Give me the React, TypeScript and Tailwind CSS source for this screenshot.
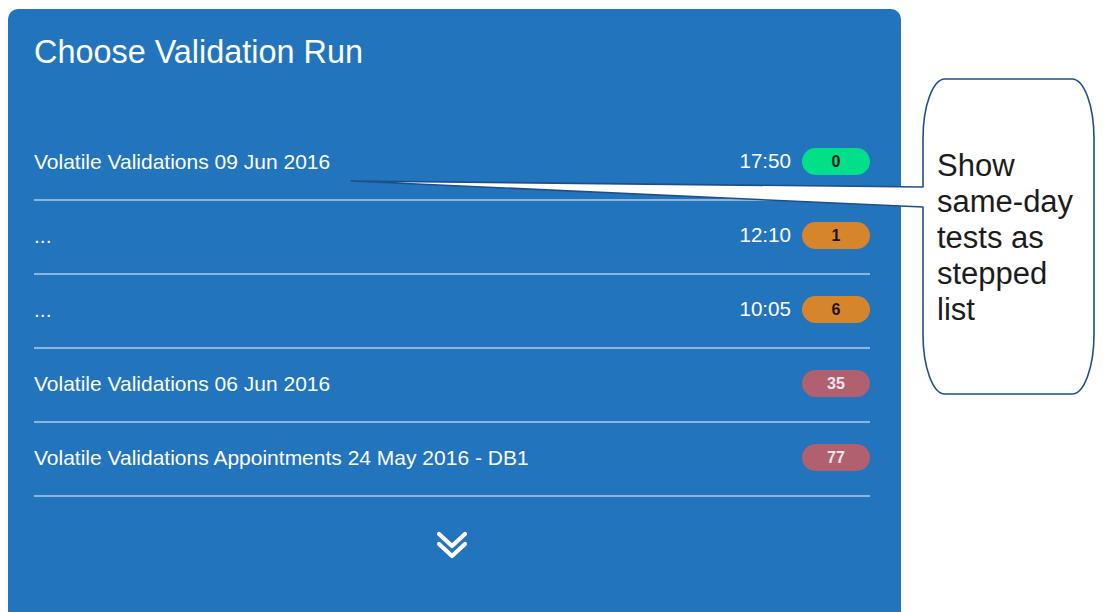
const runs = [
  { label: "Volatile Validations 09 Jun 2016", time: "17:50", count: 0, tone: "green" },
  { label: "...", time: "12:10", count: 1, tone: "orange" },
  { label: "...", time: "10:05", count: 6, tone: "orange" },
  { label: "Volatile Validations 06 Jun 2016", time: "", count: 35, tone: "red" },
  { label: "Volatile Validations Appointments 24 May 2016 - DB1", time: "", count: 77, tone: "red" },
];

const badgeTone: Record<string, string> = {
  green: "bg-[#00e08b] text-[#111a17]",
  orange: "bg-[#d6852b] text-[#1b140c]",
  red: "bg-[#b0606e] text-[#e9e6ee]",
};

function RunRow({ run }: { run: (typeof runs)[number] }) {
  return (
    <div className="h-[74px] flex items-center border-b-2 border-[#8db6de] pb-[3px]">
      <span className="flex-1 text-[21px] text-white leading-none">{run.label}</span>
      {run.time && <span className="text-[20.6px] text-white leading-none mr-[11px]">{run.time}</span>}
      <span
        className={`w-[68px] h-[27px] rounded-full flex items-center justify-center text-[16px] font-bold ${badgeTone[run.tone]}`}
      >
        {run.count}
      </span>
    </div>
  );
}

function Callout() {
  return (
    <>
      <svg className="absolute left-0 top-0 pointer-events-none" width="1117" height="612">
        <path
          d="M923 187 L923 139 A22 60 0 0 1 945 79 L1072 79 A22 60 0 0 1 1094 139 L1094 334 A22 60 0 0 1 1072 394 L945 394 A22 60 0 0 1 923 334 L923 207 L351 181 Z"
          fill="#ffffff"
          stroke="#1f4f8b"
          strokeWidth="1.6"
          strokeLinejoin="round"
        />
      </svg>
      <div className="absolute left-[937px] top-[148px] text-[31px] leading-[36px] text-[#1c1c1c]">
        Show
        <br />
        same-day
        <br />
        tests as
        <br />
        stepped
        <br />
        list
      </div>
    </>
  );
}

export default function App() {
  return (
    <div className="relative w-[1117px] h-[612px] bg-white overflow-hidden font-['Liberation_Sans',Arial,sans-serif]">
      <div className="ml-2 mt-[9px] w-[893px] h-[603px] bg-[#2274bd] rounded-t-[10px] pl-[26px] pr-[31px] pt-[23px]">
        <h1 className="text-[32.4px] leading-[40px] text-white">Choose Validation Run</h1>
        <div className="mt-[55px]">
          {runs.map((run, i) => (
            <RunRow key={i} run={run} />
          ))}
        </div>
        <div className="flex justify-center mt-[34px]">
          <svg width="32" height="28" viewBox="0 0 32 28" fill="none" stroke="#ffffff" strokeWidth="4.2" strokeLinecap="round" strokeLinejoin="round">
            <path d="M3 3 L16 15 L29 3" />
            <path d="M3 13 L16 25 L29 13" />
          </svg>
        </div>
      </div>
      <Callout />
    </div>
  );
}
